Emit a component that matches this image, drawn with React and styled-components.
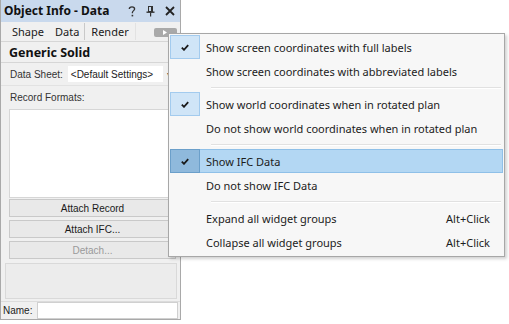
import React from "react";
import styled, { createGlobalStyle } from "styled-components";

const Global = createGlobalStyle`
  html, body { margin: 0; padding: 0; background: #ffffff; }
  body { font-family: "Liberation Sans", Arial, sans-serif; }
`;

const Page = styled.div`
  position: relative;
  width: 509px;
  height: 324px;
  background: #ffffff;
  overflow: hidden;
`;

const Panel = styled.div`
  width: 181px;
  height: 320px;
  box-sizing: border-box;
  background: #f0f0f0;
  border: 1px solid #a9a9a9;
  border-top: none;
  display: flex;
  flex-direction: column;
`;

const TitleBar = styled.div`
  height: 22px;
  flex: none;
  display: flex;
  align-items: center;
  padding: 0 5px 0 3px;
  background: #c9d9ed;
  font-family: "Noto Sans", sans-serif;
  font-weight: 700;
  font-size: 12px;
  color: #111;
`;

const TitleText = styled.span`
  flex: 1;
  line-height: 1;
`;

const TitleIcons = styled.div`
  display: flex;
  align-items: center;
  gap: 10px;
  color: #222;
`;

const TabRow = styled.div`
  height: 19px;
  flex: none;
  display: flex;
  align-items: center;
  border-bottom: 1px solid #d6d6d6;
  font-family: "Noto Sans", sans-serif;
  font-size: 11px;
  color: #1a1a1a;
  padding-left: 5px;
`;

const Tab = styled.span`
  padding: 0 ${(p) => p.$pad || 6}px;
  line-height: 19px;
`;

const TabSep = styled.span`
  width: 1px;
  height: 17px;
  background: ${(p) => (p.$faint ? "#e2e2e2" : "#c9c9c9")};
`;

const MoreButton = styled.div`
  margin-left: 18px;
  width: 23px;
  height: 9px;
  margin-top: 1px;
  border-radius: 2px;
  background: #a9a9a9;
  display: flex;
  align-items: center;
  justify-content: center;
`;

const HeaderRow = styled.div`
  height: 20px;
  flex: none;
  display: flex;
  align-items: center;
  padding-left: 8px;
  border-bottom: 1px solid #d6d6d6;
  font-family: "Noto Sans", sans-serif;
  font-weight: 700;
  font-size: 12.5px;
  color: #111;
`;

const FieldRow = styled.div`
  height: 22px;
  flex: none;
  display: flex;
  align-items: center;
  padding-left: 9px;
  border-bottom: 1px solid #e2e2e2;
  font-size: 10px;
  color: #333;
`;

const SelectBox = styled.div`
  margin-left: 5px;
  width: 95px;
  height: 16px;
  background: #ffffff;
  display: flex;
  align-items: center;
  padding-left: 3px;
  box-sizing: border-box;
  color: #222;
  white-space: nowrap;
`;

const DropArrow = styled.span`
  margin-left: 4px;
  font-size: 8px;
  color: #555;
`;

const SectionLabel = styled.div`
  height: 23px;
  flex: none;
  display: flex;
  align-items: center;
  padding-left: 9px;
  font-size: 10px;
  color: #333;
`;

const ListBox = styled.div`
  flex: none;
  height: 89px;
  margin: 0 9px 1px 8px;
  background: #ffffff;
  border: 1px solid #d6d6d6;
  box-sizing: border-box;
`;

const ButtonStack = styled.div`
  display: flex;
  flex-direction: column;
  gap: 3px;
  margin: 0 4px 4px 8px;
`;

const PanelButton = styled.div`
  height: 18px;
  box-sizing: border-box;
  border: 1px solid #c9c9c9;
  background: #e9e9e9;
  display: flex;
  align-items: center;
  justify-content: center;
  font-size: 10px;
  color: ${(p) => (p.$disabled ? "#9a9a9a" : "#1a1a1a")};
`;

const EmptyBox = styled.div`
  height: 34px;
  flex: none;
  margin: 0 3px 2px 4px;
  border: 1px solid #d9d9d9;
  background: #ececec;
`;

const NameRow = styled.div`
  height: 17px;
  flex: none;
  display: flex;
  align-items: center;
  padding-left: 2px;
  padding-right: 2px;
  font-size: 10px;
  color: #222;
  border-top: 1px solid #dcdcdc;
`;

const NameInput = styled.div`
  flex: 1;
  margin-left: 5px;
  height: 15px;
  background: #ffffff;
  border: 1px solid #d0d0d0;
`;

/* ---------- menu ---------- */

const Menu = styled.div`
  position: absolute;
  left: 168px;
  top: 33px;
  width: 337px;
  box-sizing: border-box;
  padding: 1px 1px 2px;
  background: #f7f7f7;
  border: 1px solid #a7a7a7;
  box-shadow: 2px 2px 3px rgba(0, 0, 0, 0.18);
  font-family: "Noto Sans", sans-serif;
  font-size: 11px;
  color: #1c1c1c;
`;

const MenuItem = styled.div`
  height: 24px;
  box-sizing: border-box;
  display: flex;
  align-items: center;
  padding-right: 12px;
  background: ${(p) => (p.$active ? "#b3d7f3" : "transparent")};
  border: 1px solid ${(p) => (p.$active ? "#8fc0e8" : "transparent")};
`;

const CheckCell = styled.div`
  width: 30px;
  height: 24px;
  margin: -1px 6px -1px -1px;
  box-sizing: border-box;
  display: flex;
  align-items: center;
  justify-content: center;
  background: ${(p) =>
    p.$checked ? (p.$active ? "#8fb9dc" : "#d0e5f7") : "transparent"};
  border: 1px solid
    ${(p) => (p.$checked ? (p.$active ? "#6b9fca" : "#a3cbee") : "transparent")};
`;

const ItemText = styled.span`
  flex: 1;
  white-space: nowrap;
`;

const Shortcut = styled.span`
  white-space: nowrap;
`;

const Separator = styled.div`
  height: 9px;
  display: flex;
  align-items: center;
  padding-left: 41px;
  padding-right: 2px;
  &::after {
    content: "";
    flex: 1;
    height: 1px;
    background: #e1e1e1;
    box-shadow: 0 1px 0 #ffffff;
  }
`;

const Check = () => (
  <svg width="8" height="7" viewBox="0 0 8 7">
    <path d="M0.8 3.6 L3 5.8 L7.2 1.2" fill="none" stroke="#1a1a1a" strokeWidth="1.8" />
  </svg>
);

const HelpIcon = () => (
  <svg width="8" height="11" viewBox="0 0 8 11">
    <path d="M1.3 3 C1.3 1.3 2.6 0.8 4 0.8 C5.6 0.8 6.6 1.7 6.6 3 C6.6 4.5 4.4 4.8 4.4 6.6 L4.4 7.3"
      fill="none" stroke="#333" strokeWidth="1.3" />
    <rect x="3.6" y="8.8" width="1.6" height="1.6" fill="#333" />
  </svg>
);

const PinIcon = () => (
  <svg width="9" height="11" viewBox="0 0 9 11">
    <rect x="2.5" y="0.5" width="4" height="5" fill="none" stroke="#333" strokeWidth="1" />
    <rect x="5" y="1" width="1.5" height="4.5" fill="#333" />
    <rect x="0.5" y="5.5" width="8" height="1.4" fill="#333" />
    <rect x="4" y="6.5" width="1.2" height="4" fill="#333" />
  </svg>
);

const CloseIcon = () => (
  <svg width="10" height="10" viewBox="0 0 10 10">
    <path d="M1 1 L9 9 M9 1 L1 9" stroke="#222" strokeWidth="1.8" />
  </svg>
);

const menuEntries = [
  { text: "Show screen coordinates with full labels", checked: true },
  { text: "Show screen coordinates with abbreviated labels" },
  { sep: true },
  { text: "Show world coordinates when in rotated plan", checked: true },
  { text: "Do not show world coordinates when in rotated plan" },
  { sep: true },
  { text: "Show IFC Data", checked: true, active: true },
  { text: "Do not show IFC Data" },
  { sep: true },
  { text: "Expand all widget groups", shortcut: "Alt+Click" },
  { text: "Collapse all widget groups", shortcut: "Alt+Click" },
];

export default function App() {
  return (
    <Page>
      <Global />
      <Panel>
        <TitleBar>
          <TitleText>Object Info - Data</TitleText>
          <TitleIcons>
            <HelpIcon />
            <PinIcon />
            <CloseIcon />
          </TitleIcons>
        </TitleBar>
        <TabRow>
          <Tab>Shape</Tab>
          <Tab $pad={5}>Data</Tab>
          <TabSep />
          <Tab>Render</Tab>
          <TabSep $faint />
          <MoreButton>
            <svg width="4" height="5" viewBox="0 0 4 5">
              <path d="M0 0 L4 2.5 L0 5 Z" fill="#ffffff" />
            </svg>
          </MoreButton>
        </TabRow>
        <HeaderRow>Generic Solid</HeaderRow>
        <FieldRow>
          Data Sheet:
          <SelectBox>&lt;Default Settings&gt;</SelectBox>
          <DropArrow>▾</DropArrow>
        </FieldRow>
        <SectionLabel>Record Formats:</SectionLabel>
        <ListBox />
        <ButtonStack>
          <PanelButton>Attach Record</PanelButton>
          <PanelButton>Attach IFC...</PanelButton>
          <PanelButton $disabled>Detach...</PanelButton>
        </ButtonStack>
        <EmptyBox />
        <NameRow>
          Name:
          <NameInput />
        </NameRow>
      </Panel>

      <Menu>
        {menuEntries.map((e, i) =>
          e.sep ? (
            <Separator key={i} />
          ) : (
            <MenuItem key={i} $active={e.active}>
              <CheckCell $checked={e.checked} $active={e.active}>
                {e.checked && <Check />}
              </CheckCell>
              <ItemText>{e.text}</ItemText>
              {e.shortcut && <Shortcut>{e.shortcut}</Shortcut>}
            </MenuItem>
          )
        )}
      </Menu>
    </Page>
  );
}
